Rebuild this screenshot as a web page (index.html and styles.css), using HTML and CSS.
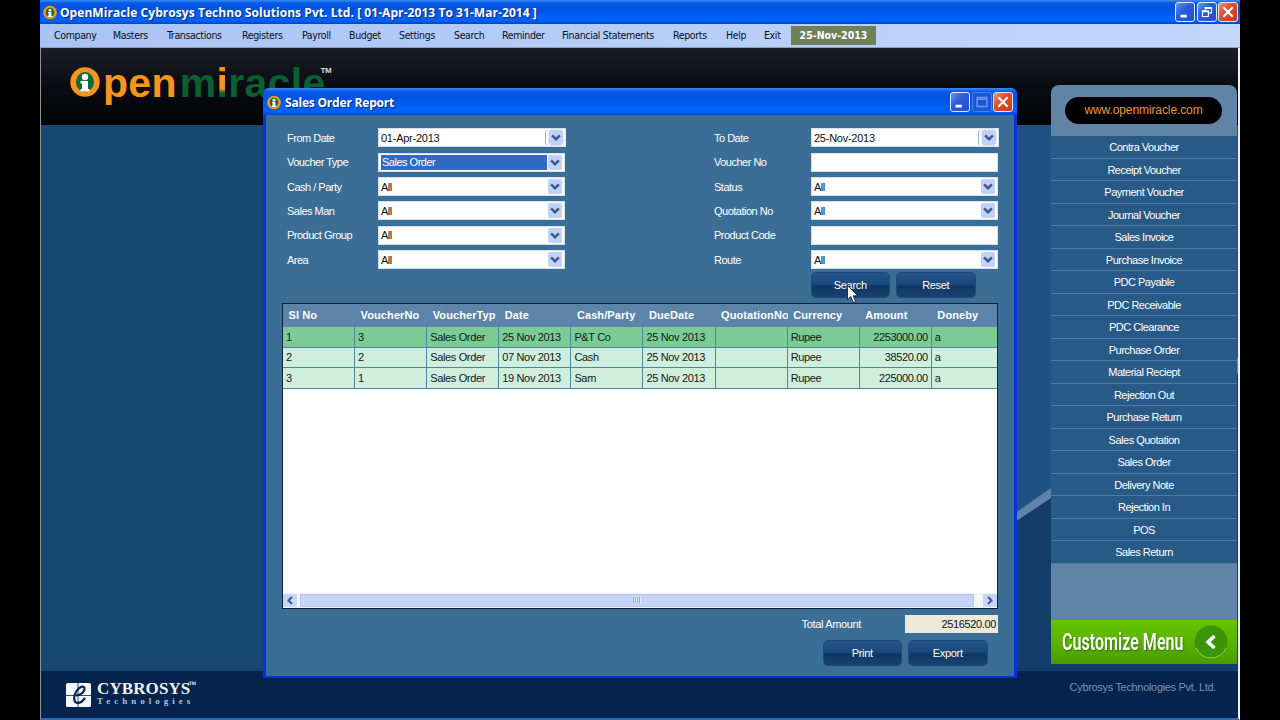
FILE: index.html
```
<!DOCTYPE html>
<html lang="en">
  <head>
    <meta charset="UTF-8" />
    <meta name="viewport" content="width=device-width, initial-scale=1.0" />
    <title>OpenMiracle - Sales Order Report</title>
    <link rel="stylesheet" href="styles.css">
  </head>
  <body>
    <!-- shared symbols -->
    <svg class="symbols" width="0" height="0">
      <symbol id="logo" viewBox="0 0 30 30">
        <circle cx="15" cy="15" r="14.7" fill="#f7941d" />
        <ellipse cx="15" cy="15" rx="9" ry="10" fill="#0b6b3a" />
        <circle cx="15" cy="10" r="3.2" fill="#fff" />
        <path d="M10.5 14h7.5v8h1.5v2.5h-9V22H12v-5.500h-1.500z" fill="#fff" />
      </symbol>
      <symbol id="arrow-down" viewBox="0 0 9 6">
        <path d="M1 1l3.500 3.500L8 1" fill="none" stroke="#40588c" stroke-width="2.200" />
      </symbol>
      <symbol id="arrow-left" viewBox="0 0 6 9">
        <path d="M5 1L1.500 4.500 5 8" fill="none" stroke="#40588c" stroke-width="2" />
      </symbol>
      <symbol id="minimize" viewBox="0 0 20 20">
        <path d="M5 13h7v3H5z" fill="#fff" />
      </symbol>
      <symbol id="maximize" viewBox="0 0 20 20">
        <path d="M4.500 5h11v10h-11z M4.500 7h11" fill="none" stroke="#6f9bf2" stroke-width="1.500" />
      </symbol>
      <symbol id="restore" viewBox="0 0 20 20">
        <path d="M8 8V5h7v6h-3 M8 6h7" fill="none" stroke="#fff" stroke-width="1.300" />
        <path d="M5 8.700h6.500V15H5z M5 9.700h6.500" fill="none" stroke="#fff" stroke-width="1.300" />
      </symbol>
      <symbol id="close" viewBox="0 0 20 20">
        <path d="M4.800 4.800l10.400 10.400M15.200 4.800L4.800 15.200" stroke="#fff" stroke-width="2.300" />
      </symbol>
    </svg>

    <div class="app">
      <div class="titlebar">
        <svg class="app-icon"><use href="#logo" /></svg>
        <span class="title">OpenMiracle Cybrosys Techno Solutions Pvt. Ltd. [ 01-Apr-2013 To 31-Mar-2014 ]</span>
        <div class="controls">
          <svg class="control"><use href="#minimize" /></svg>
          <svg class="control"><use href="#restore" /></svg>
          <svg class="control red"><use href="#close" /></svg>
        </div>
      </div>

      <div class="menu">
        <span>Company</span>
        <span>Masters</span>
        <span>Transactions</span>
        <span>Registers</span>
        <span>Payroll</span>
        <span>Budget</span>
        <span>Settings</span>
        <span>Search</span>
        <span>Reminder</span>
        <span>Financial Statements</span>
        <span>Reports</span>
        <span>Help</span>
        <span>Exit</span>
        <span class="today">25-Nov-2013</span>
      </div>

      <div class="workspace">
        <div class="banner">
          <svg class="brand-o"><use href="#logo" /></svg>
          <div class="brand"><span class="pen">pen</span><span class="miracle">m<span class="brand-i">i</span>racle</span></div>
          <span class="tm">TM</span>
        </div>
        <div class="desktop">
          <svg class="stripe" viewBox="0 0 1197 546" preserveAspectRatio="none">
            <path d="M700 546L977 387 1197 240V546z" fill="#133d6b" />
            <path d="M877 456L977 386 1197 232V248L977 395 877 464z" fill="#5f83a9" />
          </svg>
        </div>
        <div class="footer">
          <svg class="cybrosys-icon" viewBox="0 0 25 24">
            <rect width="25" height="24" rx="1.500" fill="#f4f7fb" />
            <path d="M0 12.500h25M12 0v24" stroke="#04244f" stroke-width="0.800" />
            <path d="M10 12.500c5 0 9-4 8.500-7.500-.8-2.500-5-1.500-8 3s-3.500 11 .5 11.800c3 .5 6-2 8-5" fill="none" stroke="#04244f" stroke-width="2.200" />
          </svg>
          <div class="cybrosys">
            <div class="cybrosys-name">CYBROSYS<sup>™</sup></div>
            <div class="cybrosys-sub">Technologies</div>
          </div>
          <span class="company">Cybrosys Technologies Pvt. Ltd.</span>
        </div>
      </div>

      <div class="sidebar">
        <div class="site">www.openmiracle.com</div>
        <ul>
          <li>Contra Voucher</li>
          <li>Receipt Voucher</li>
          <li>Payment Voucher</li>
          <li>Journal Voucher</li>
          <li>Sales Invoice</li>
          <li>Purchase Invoice</li>
          <li>PDC Payable</li>
          <li>PDC Receivable</li>
          <li>PDC Clearance</li>
          <li>Purchase Order</li>
          <li>Material Reciept</li>
          <li>Rejection Out</li>
          <li>Purchase Return</li>
          <li>Sales Quotation</li>
          <li>Sales Order</li>
          <li>Delivery Note</li>
          <li>Rejection In</li>
          <li>POS</li>
          <li>Sales Return</li>
        </ul>
        <div class="customize">
          <span>Customize Menu</span>
          <svg viewBox="0 0 34 34">
            <circle cx="17" cy="17" r="16.500" fill="#3a9606" />
            <path d="M2 23a16.200 16.200 0 0 0 30 0" fill="none" stroke="#8fd84c" />
            <path d="M20.500 11l-6.500 6 6.500 6" fill="none" stroke="#fff" stroke-width="3.600" />
          </svg>
        </div>
      </div>

      <div class="dialog">
        <div class="titlebar">
          <svg class="app-icon"><use href="#logo" /></svg>
          <span class="title">Sales Order Report</span>
          <div class="controls">
            <svg class="control"><use href="#minimize" /></svg>
            <svg class="control disabled"><use href="#maximize" /></svg>
            <svg class="control red"><use href="#close" /></svg>
          </div>
        </div>
        <div class="dialog-body">
          <div class="filters">
            <label>From Date</label>
            <div class="field date">01-Apr-2013<svg><use href="#arrow-down" /></svg></div>
            <label>To Date</label>
            <div class="field date">25-Nov-2013<svg><use href="#arrow-down" /></svg></div>

            <label>Voucher Type</label>
            <div class="field"><span class="selected">Sales Order</span><svg><use href="#arrow-down" /></svg></div>
            <label>Voucher No</label>
            <div class="field"></div>

            <label>Cash / Party</label>
            <div class="field">All<svg><use href="#arrow-down" /></svg></div>
            <label>Status</label>
            <div class="field">All<svg><use href="#arrow-down" /></svg></div>

            <label>Sales Man</label>
            <div class="field">All<svg><use href="#arrow-down" /></svg></div>
            <label>Quotation No</label>
            <div class="field">All<svg><use href="#arrow-down" /></svg></div>

            <label>Product Group</label>
            <div class="field">All<svg><use href="#arrow-down" /></svg></div>
            <label>Product Code</label>
            <div class="field"></div>

            <label>Area</label>
            <div class="field">All<svg><use href="#arrow-down" /></svg></div>
            <label>Route</label>
            <div class="field">All<svg><use href="#arrow-down" /></svg></div>
          </div>
          <div class="buttons search-buttons">
            <button>Search</button>
            <button>Reset</button>
          </div>

          <div class="grid">
            <table>
              <thead>
                <tr>
                  <th>Sl No</th>
                  <th>VoucherNo</th>
                  <th>VoucherTyp</th>
                  <th>Date</th>
                  <th>Cash/Party</th>
                  <th>DueDate</th>
                  <th>QuotationNo</th>
                  <th>Currency</th>
                  <th>Amount</th>
                  <th>Doneby</th>
                </tr>
              </thead>
              <tbody>
                <tr class="current">
                  <td>1</td>
                  <td>3</td>
                  <td>Sales Order</td>
                  <td>25 Nov 2013</td>
                  <td>P&amp;T Co</td>
                  <td>25 Nov 2013</td>
                  <td></td>
                  <td>Rupee</td>
                  <td class="amount">2253000.00</td>
                  <td>a</td>
                </tr>
                <tr>
                  <td>2</td>
                  <td>2</td>
                  <td>Sales Order</td>
                  <td>07 Nov 2013</td>
                  <td>Cash</td>
                  <td>25 Nov 2013</td>
                  <td></td>
                  <td>Rupee</td>
                  <td class="amount">38520.00</td>
                  <td>a</td>
                </tr>
                <tr>
                  <td>3</td>
                  <td>1</td>
                  <td>Sales Order</td>
                  <td>19 Nov 2013</td>
                  <td>Sam</td>
                  <td>25 Nov 2013</td>
                  <td></td>
                  <td>Rupee</td>
                  <td class="amount">225000.00</td>
                  <td>a</td>
                </tr>
              </tbody>
            </table>
            <div class="scrollbar">
              <span class="scroll-arrow"><svg><use href="#arrow-left" /></svg></span>
              <span class="thumb"><i></i></span>
              <span class="scroll-arrow right"><svg><use href="#arrow-left" /></svg></span>
            </div>
          </div>

          <div class="total">
            <span>Total Amount</span>
            <div class="total-value">2516520.00</div>
          </div>
          <div class="buttons print-buttons">
            <button>Print</button>
            <button>Export</button>
          </div>
        </div>
      </div>

      <svg class="cursor" viewBox="0 0 12 19">
        <path d="M0.500 0.500v14l3.300-3 2.500 6 2.400-1-2.500-5.700h4.500z" fill="#fff" stroke="#111" stroke-width="0.800" />
      </svg>
    </div>
  </body>
</html>
```
FILE: styles.css
```
* {
  box-sizing: border-box;
}
body {
  margin: 0;
  background: #000;
  overflow: hidden;
  font-family: "Liberation Sans", Arial, sans-serif;
  font-size: 11px;
  letter-spacing: -0.5px;
}
.symbols {
  position: absolute;
}
.app {
  position: relative;
  width: 1200px;
  height: 720px;
  margin-left: 40px;
  display: flex;
  flex-direction: column;
}

/* window title bars */
.titlebar {
  flex: none;
  display: flex;
  align-items: center;
  height: 24px;
  padding: 0 2px 0 3px;
  background: linear-gradient(#3b8cf5 0, #0a5be8 12%, #0053e0 35%, #0062fa 75%, #0060f8 88%, #0043c4 100%);
  color: #fff;
}
.app-icon {
  width: 14px;
  height: 15px;
}
.title {
  margin-left: 3px;
  font-family: "Open Sans", sans-serif;
  font-size: 12px;
  font-weight: 700;
  letter-spacing: 0.06px;
  white-space: nowrap;
  text-shadow: 1px 1px 1px #0a2a80;
}
.controls {
  display: flex;
  gap: 1.5px;
  margin-left: auto;
}
.control {
  width: 20px;
  height: 20px;
  border: 1px solid #dfe9fb;
  border-radius: 3px;
  background: linear-gradient(135deg, #6f97f0, #2a5cdc 40%, #1e50d0);
}
.control.red {
  background: linear-gradient(135deg, #f0907a, #e2502b 40%, #c93a12);
}
.control.disabled {
  border-color: #4a80ea;
  background: #1c56d8;
}

/* menu */
.menu {
  flex: none;
  display: grid;
  grid-template-columns: 59px 54px 75px 60px 47px 50px 55px 48px 60px 111px 53px 38px 27px 85px;
  align-items: center;
  height: 24px;
  padding: 0 0 1px 14px;
  background: linear-gradient(90deg, #a9c3f5, #c3d7fb);
  border-bottom: 1px solid #8d9cb8;
  color: #0a0f1c;
  font-family: "DejaVu Sans Condensed", "DejaVu Sans", sans-serif;
  font-size: 10.5px;
  letter-spacing: -0.35px;
  white-space: nowrap;
}
.today {
  height: 19px;
  line-height: 19px;
  background: #6f8159;
  color: #fff;
  font-weight: bold;
  text-align: center;
  letter-spacing: 0;
}

/* main area */
.workspace {
  flex: 1;
  display: flex;
  flex-direction: column;
  border-left: 1px solid #8f9490;
  border-right: 2px solid #e8edf2;
  border-bottom: 2px solid #2f6bb8;
}
.banner {
  display: flex;
  height: 77px;
  padding: 19px 0 0 29px;
  background: linear-gradient(#1a1e25, #0a0c12 50%, #020204);
}
.brand-o {
  width: 30px;
  height: 30px;
}
.brand {
  margin-left: 3px;
  margin-top: -7px;
  font-size: 41px;
  line-height: 46px;
  font-weight: bold;
  letter-spacing: 0.3px;
}
.pen {
  color: #f7941d;
}
.miracle {
  margin-left: 3px;
  color: #0b5f33;
}
.brand-i {
  background: linear-gradient(#f7941d 62%, #0b5f33 72%);
  -webkit-background-clip: text;
  background-clip: text;
  color: transparent;
}
.tm {
  margin-left: -5px;
  color: #ddd;
  font-size: 8px;
  line-height: 8px;
  font-weight: bold;
  letter-spacing: -0.5px;
}
.desktop {
  flex: 1;
  background: linear-gradient(90deg, #174873 0, #174873 30%, #1f5286 90%);
}
.stripe {
  display: block;
  width: 100%;
  height: 546px;
}
.footer {
  display: flex;
  align-items: center;
  height: 47px;
  padding: 0 22px 0 25px;
  background: #04234d;
}
.cybrosys-icon {
  width: 25px;
  height: 24px;
}
.cybrosys {
  margin-left: 6px;
  color: #eef3fa;
  font-family: "Liberation Serif", serif;
  font-weight: bold;
}
.cybrosys-name {
  height: 14px;
  font-size: 17px;
  line-height: 14px;
  letter-spacing: 0.1px;
}
.cybrosys-name sup {
  font-size: 8px;
  line-height: 0;
  letter-spacing: -1px;
  margin-left: -2px;
}
.cybrosys-sub {
  font-size: 9px;
  line-height: 11px;
  letter-spacing: 4px;
  color: #b5c2d6;
}
.company {
  margin-left: auto;
  margin-bottom: 16px;
  color: #6d93c4;
  letter-spacing: -0.32px;
}

/* voucher shortcuts */
.sidebar {
  position: absolute;
  left: 1011px;
  top: 85px;
  width: 186px;
  height: 579px;
  display: flex;
  flex-direction: column;
  border-radius: 8px 8px 0 0;
  background: #6083a6;
  color: #fff;
  text-align: center;
}
.site {
  margin: 12px 15px 12px 14px;
  height: 27px;
  line-height: 27px;
  border-radius: 14px;
  background: #000;
  color: #e8963c;
  font-size: 12px;
  letter-spacing: -0.1px;
}
.sidebar ul {
  margin: 0;
  padding: 0;
  list-style: none;
}
.sidebar li {
  height: 22.5px;
  line-height: 22px;
  background: #285a88;
  border-bottom: 1px solid #4f7aa3;
}
.customize {
  display: flex;
  align-items: center;
  justify-content: space-between;
  height: 44px;
  margin-top: auto;
  padding: 0 9px 0 11px;
  background: linear-gradient(#66c400, #58b000 60%, #479b02);
}
.customize span {
  width: 124px;
  font-family: Roboto, sans-serif;
  font-size: 24px;
  font-weight: 600;
  letter-spacing: 0;
  white-space: nowrap;
  text-align: left;
  text-shadow: 1px 1px 2px #2b6a00;
  transform: scaleX(0.67);
  transform-origin: left;
}
.customize svg {
  width: 34px;
  height: 34px;
}

/* report dialog */
.dialog {
  position: absolute;
  left: 223px;
  top: 88px;
  width: 754px;
  height: 590px;
  display: flex;
  flex-direction: column;
  border: solid #0831d9;
  border-width: 0 3px 2px;
  border-radius: 6px 6px 0 0;
  background: #3a6e96;
}
.dialog .titlebar {
  height: 27px;
  margin: 0 -3px;
  padding: 1px 4px 0;
  border-radius: 6px 6px 0 0;
}
.dialog .title {
  margin-left: 4px;
  letter-spacing: -0.2px;
}
.dialog-body {
  display: flex;
  flex-direction: column;
  padding: 10.6px 16px 0;
}
.filters {
  display: grid;
  grid-template-columns: 91px 187px 246px 187px;
  grid-template-rows: repeat(6, 24.4px);
  align-items: center;
  padding-left: 5px;
  color: #fff;
}
.filters label:nth-child(4n + 3) {
  margin-left: 149px;
  white-space: nowrap;
}
.field {
  display: flex;
  align-items: center;
  justify-content: space-between;
  height: 19px;
  padding: 0 2px 0 2px;
  background: #fff;
  border: 1px solid #d5e0ec;
  color: #111;
}
.field svg {
  flex: none;
  width: 14px;
  height: 15px;
  padding: 4px 2px;
  border-radius: 2px;
  background: #c1d2f8;
}
.date {
  width: 188px;
  letter-spacing: -0.25px;
}
.date svg {
  outline: 1px solid #e4ebf7;
  box-shadow: -3px 0 0 #fff, -4px 0 0 #9fb3cc;
}
.selected {
  width: 166px;
  height: 15px;
  padding-left: 1px;
  line-height: 15px;
  background: #316ac5;
  color: #fff;
}
.buttons {
  display: flex;
  gap: 6px;
}
button {
  width: 79.5px;
  height: 26px;
  padding: 0;
  border: 1px solid #1d4a78;
  border-radius: 5px;
  background: linear-gradient(#23568a, #1b4a7c 45%, #103762 55%, #174372);
  color: #fff;
  font: inherit;
  letter-spacing: -0.3px;
}
.search-buttons {
  margin-left: 528.5px;
}

.grid {
  display: flex;
  flex-direction: column;
  height: 306px;
  margin-top: 5px;
  border: 1px solid #0d2438;
  background: #fff;
  overflow: hidden;
}
table {
  width: 721px;
  border-collapse: separate;
  border-spacing: 0;
  table-layout: fixed;
}
th {
  height: 23px;
  padding: 0 0 0 5.5px;
  overflow: hidden;
  background: #5b84a8;
  color: #fff;
  text-align: left;
  letter-spacing: 0.1px;
  white-space: nowrap;
}
td {
  height: 20.6px;
  padding: 0 3px;
  background: #cfeedb;
  border-right: 1px solid #4b86a3;
  border-bottom: 1px solid #4b86a3;
  color: #10201a;
  white-space: nowrap;
  letter-spacing: -0.35px;
}
.current td {
  background: #7acb94;
}
.amount {
  text-align: right;
}
.scrollbar {
  display: flex;
  align-items: center;
  height: 15px;
  margin-top: auto;
  background: #f3f4f6;
}
.scroll-arrow {
  display: flex;
  align-items: center;
  justify-content: center;
  width: 14px;
  height: 13px;
  background: #c6d5fa;
}
.scroll-arrow svg {
  width: 6px;
  height: 9px;
}
.scroll-arrow.right {
  transform: scaleX(-1);
}
.thumb {
  display: flex;
  align-items: center;
  justify-content: center;
  width: 674px;
  height: 13px;
  margin: 0 auto 0 3px;
  border: 1px solid #b3c4ee;
  background: #c6d3fb;
}
.thumb i {
  width: 8px;
  height: 6px;
  background: repeating-linear-gradient(90deg, #93a9dc 0, #93a9dc 1px, #e4ebfd 1px, #e4ebfd 2px);
}

.total {
  display: flex;
  align-items: center;
  justify-content: flex-end;
  margin-top: 6px;
  color: #fff;
  letter-spacing: -0.35px;
}
.total-value {
  width: 93px;
  height: 18px;
  margin-left: 44px;
  padding-right: 2px;
  line-height: 18px;
  background: #ece9d8;
  color: #111;
  text-align: right;
}
.print-buttons {
  margin: 7px 0 0 540.5px;
}

.cursor {
  position: absolute;
  left: 807px;
  top: 285px;
  width: 12px;
  height: 19px;
}
```
